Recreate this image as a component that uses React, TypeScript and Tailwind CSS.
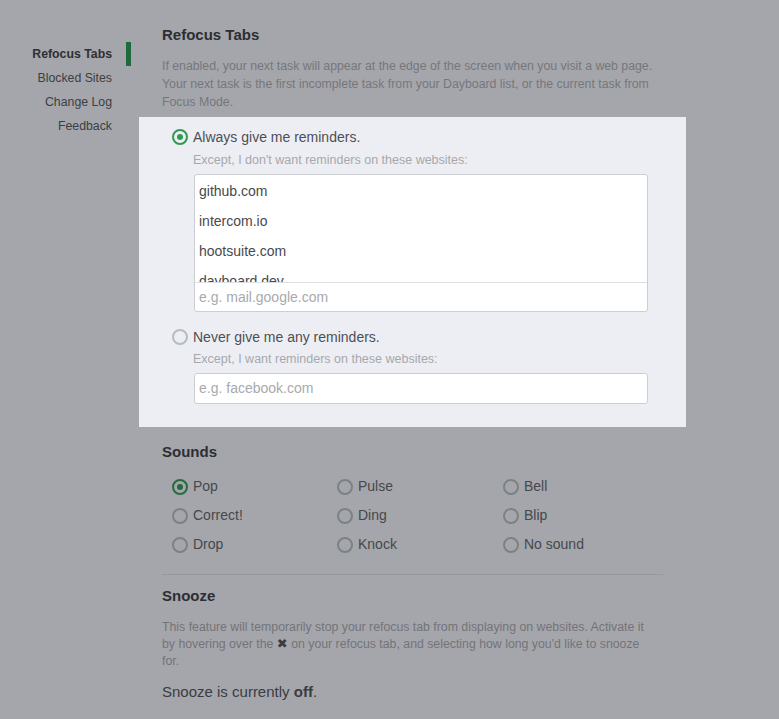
import React from "react";

function Radio({ checked, ring, dot }: { checked?: boolean; ring: string; dot?: string }) {
  return (
    <span
      className={`relative inline-flex h-[16px] w-[16px] shrink-0 items-center justify-center rounded-full border-2 ${ring}`}
    >
      {checked && <span className={`h-[6px] w-[6px] rounded-full ${dot}`} />}
    </span>
  );
}

const sounds = [
  ["Pop", "Pulse", "Bell"],
  ["Correct!", "Ding", "Blip"],
  ["Drop", "Knock", "No sound"],
];

export default function App() {
  return (
    <div className="flex min-h-screen bg-[#a5a6ab] font-['Liberation_Sans',Arial,sans-serif] antialiased">
      <nav className="flex w-[131px] shrink-0 flex-col pt-[42px] text-[12.3px]">
        <div className="flex h-[24px] items-center justify-end border-r-[5px] border-[#1f6a3c] pr-[14px] font-bold text-[#2e3034]">
          Refocus Tabs
        </div>
        {["Blocked Sites", "Change Log", "Feedback"].map((t) => (
          <div
            key={t}
            className="flex h-[24px] items-center justify-end border-r-[5px] border-transparent pr-[14px] text-[#3c3e42]"
          >
            {t}
          </div>
        ))}
      </nav>

      <main className="ml-[31px] w-[501px] pt-[26px]">
        <h2 className="text-[15px] font-bold leading-[18px] text-[#2c2e32]">Refocus Tabs</h2>
        <p className="mt-[13px] text-[12.3px] leading-[18px] text-[#75777c]">
          If enabled, your next task will appear at the edge of the screen when you visit a web page. Your next task
          is the first incomplete task from your Dayboard list, or the current task from Focus Mode.
        </p>

        <section className="-mx-[23px] mt-[6px] bg-[#edeef3] pb-[23px] pl-[33px] pr-[38px] pt-[10px]">
          <div className="flex h-[20px] items-center gap-[5px]">
            <Radio checked ring="border-[#2f9a50]" dot="bg-[#2f9a50]" />
            <span className="text-[14px] text-[#4d4f53]">Always give me reminders.</span>
          </div>
          <div className="mt-[4px] pl-[21px] text-[12.5px] leading-[18px] text-[#a6a8ad]">
            Except, I don't want reminders on these websites:
          </div>
          <div className="ml-[22px] mt-[5px] h-[138px] overflow-hidden rounded-[3px] border border-[#cdced2] bg-white">
            <div className="h-[107px] overflow-hidden pt-[1px] text-[14px] text-[#47494d]">
              {["github.com", "intercom.io", "hootsuite.com", "dayboard.dev"].map((s) => (
                <div key={s} className="flex h-[30px] items-center pl-[4px]">
                  {s}
                </div>
              ))}
            </div>
            <div className="flex h-[29px] items-center border-t border-[#dedfe2] pl-[4px] text-[14px] text-[#a9aaad]">
              e.g. mail.google.com
            </div>
          </div>

          <div className="mt-[15px] flex h-[20px] items-center gap-[5px]">
            <Radio ring="border-[#b4bdbd]" />
            <span className="text-[14px] text-[#4d4f53]">Never give me any reminders.</span>
          </div>
          <div className="mt-[3px] pl-[21px] text-[12.5px] leading-[18px] text-[#a6a8ad]">
            Except, I want reminders on these websites:
          </div>
          <div className="ml-[22px] mt-[5px] flex h-[31px] items-center rounded-[3px] border border-[#cdced2] bg-white pl-[4px] text-[14px] text-[#a9aaad]">
            e.g. facebook.com
          </div>
        </section>

        <h2 className="mt-[16px] text-[15px] font-bold leading-[18px] text-[#2c2e32]">Sounds</h2>
        <div className="mt-[11px] grid grid-cols-[165px_166px_165px] pl-[10px]">
          {sounds.flat().map((s, i) => (
            <div key={s} className="flex h-[29px] items-center gap-[5px]">
              {i === 0 ? (
                <Radio checked ring="border-[#256c3d]" dot="bg-[#256c3d]" />
              ) : (
                <Radio ring="border-[#7b8283]" />
              )}
              <span className="text-[14px] text-[#46484c]">{s}</span>
            </div>
          ))}
        </div>

        <div className="mt-[15px] border-t border-[#97989d]" />

        <h2 className="mt-[12px] text-[15px] font-bold leading-[18px] text-[#2c2e32]">Snooze</h2>
        <p className="mt-[14px] pr-[10px] text-[12.3px] leading-[17px] text-[#737479]">
          This feature will temporarily stop your refocus tab from displaying on websites. Activate it by hovering
          over the{" "}
          <span className="inline-block align-baseline font-['DejaVu_Sans'] text-[13px] leading-[12px] text-[#3a3c40]">
            ✖
          </span>{" "}
          on your refocus tab, and selecting how long you'd like to snooze for.
        </p>
        <p className="mt-[12px] text-[15px] leading-[20px] text-[#3a3c40]">
          Snooze is currently <span className="font-bold">off</span>.
        </p>
      </main>
    </div>
  );
}
